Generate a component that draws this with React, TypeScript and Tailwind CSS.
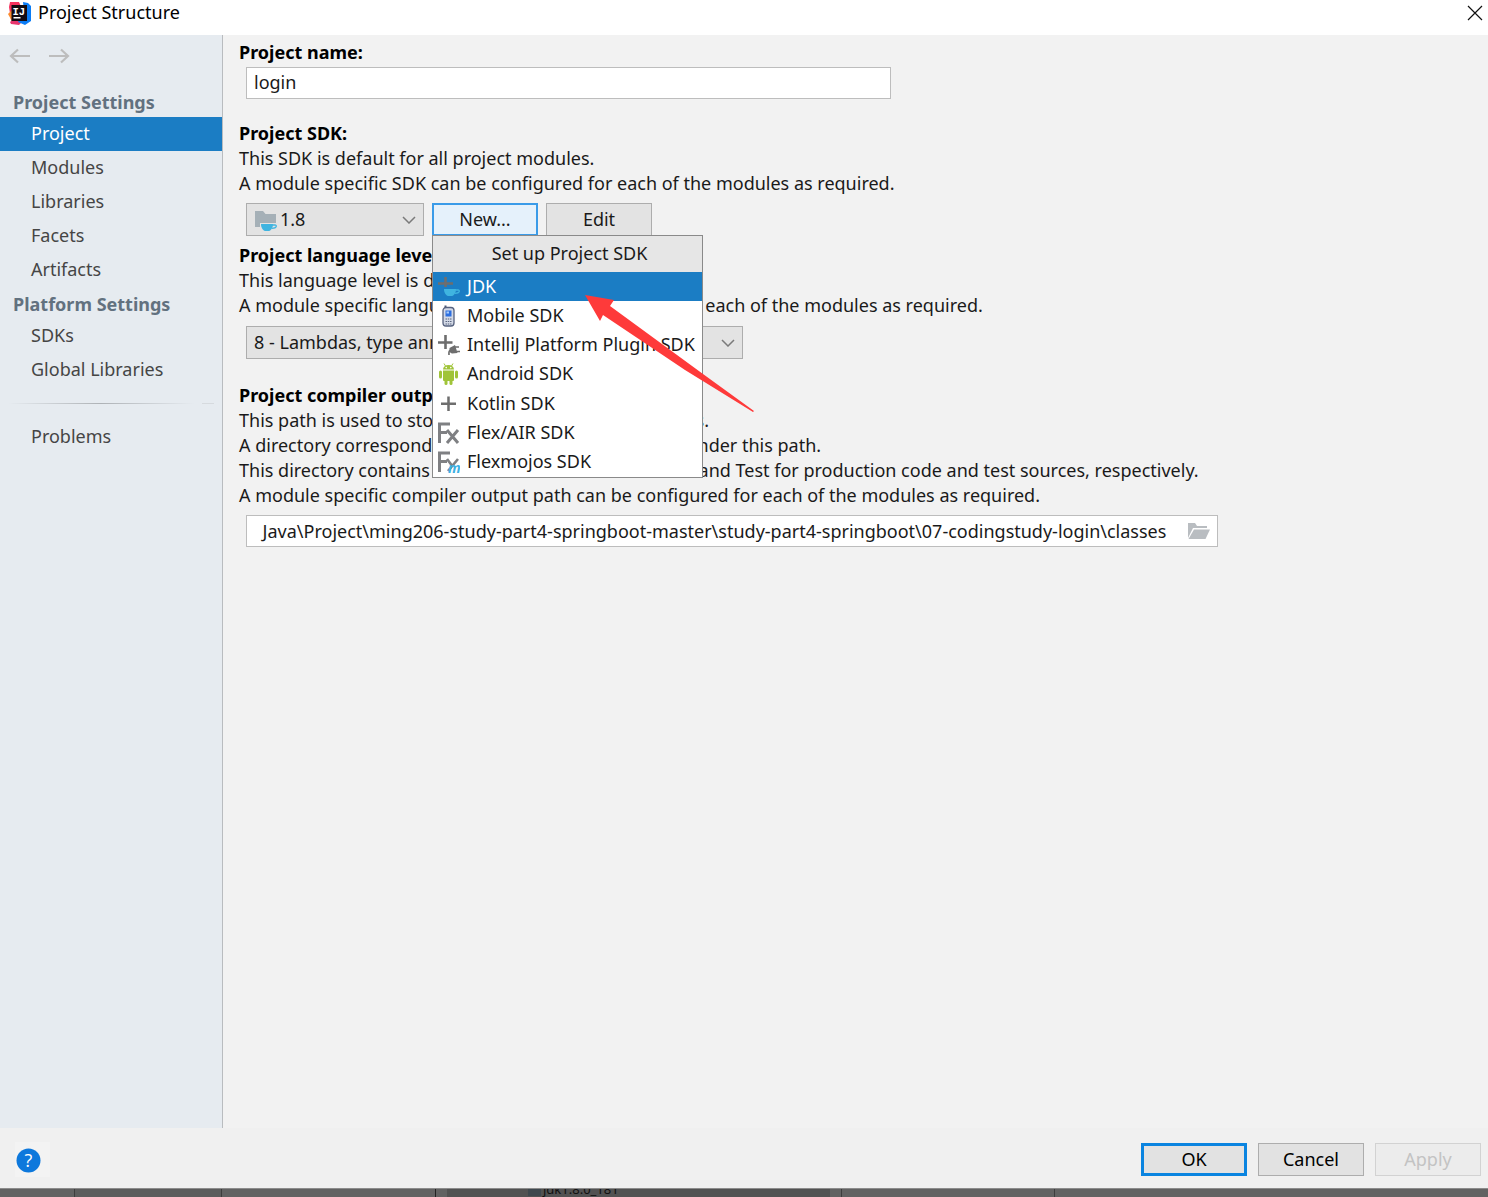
import { useEffect, useRef, useState } from 'react';
import type { ReactNode } from 'react';

const projectItems = ['Project', 'Modules', 'Libraries', 'Facets', 'Artifacts'];
const platformItems = ['SDKs', 'Global Libraries'];

function IdeaLogo() {
  return (
    <svg viewBox="0 0 24 24" className="w-6 h-6" aria-hidden="true">
      <path d="M1 6 L2 1 L11 1 L14 8 L6 20 L3 19 Z" fill="#f5315d" />
      <path d="M0 13 L5 8 L9 20 L5 22 Z" fill="#fb8a2c" />
      <path d="M2 21 L8 16 L14 21 L11 24 L3 23 Z" fill="#e8356d" />
      <path d="M15 1 L20 2 L23 5 L23 20 L17 24 L10 21 L16 10 Z" fill="#0a7cf5" />
      <rect x="3.500" y="4" width="15.500" height="16" fill="#120c12" />
      <text x="4.500" y="13.500" fontSize="10.500" fontWeight="700" fontFamily="Liberation Mono, monospace" fill="#fff">
        IJ
      </text>
      <rect x="5.500" y="16" width="7" height="1.500" fill="#fff" />
    </svg>
  );
}

function Cup({ x, y }: { x: number; y: number }) {
  return (
    <g transform={`translate(${x} ${y})`}>
      <path d="M0 0 H12 C12 4 10 6.500 8 7 H4 C2 6.500 0 4 0 0 Z" fill="#3fb4e0" />
      <path d="M11.500 1 H14 Q15.500 1 15.200 2.500 Q14.500 4.300 11 4.300" fill="none" stroke="#3fb4e0" strokeWidth="1.300" />
    </g>
  );
}

function SdkFolderIcon() {
  return (
    <svg viewBox="0 0 22 22" className="w-[22px] h-[22px]" aria-hidden="true">
      <path d="M0 1 H8 L10.500 4 H21 V13 H5 V17 H0 Z" fill="#a5b0b7" />
      <Cup x={6} y={14} />
    </svg>
  );
}

function JdkIcon() {
  return (
    <svg viewBox="0 0 22 22" className="w-[22px] h-[22px]" aria-hidden="true">
      <path d="M7.500 1 V11 M0 7.500 H15" stroke="#6e6e6e" strokeWidth="2.600" />
      <Cup x={6} y={13} />
    </svg>
  );
}

function MobileIcon() {
  return (
    <svg viewBox="0 0 22 22" className="w-[22px] h-[22px]" aria-hidden="true">
      <path d="M7.500 4 V0.500" stroke="#4b5875" strokeWidth="2" />
      <rect x="5" y="2.500" width="11" height="18.500" rx="3" fill="#d3d9e6" stroke="#56627f" strokeWidth="1.300" />
      <rect x="7.500" y="5.500" width="6" height="6" fill="#2d6fe0" />
      <rect x="8.500" y="6.500" width="2.500" height="2" fill="#a9cdfb" />
      <path d="M7.500 14 H13.500 M7.500 16.500 H13.500 M7.500 19 H13.500" stroke="#5b6680" strokeWidth="1.200" strokeDasharray="1.500 0.750" />
    </svg>
  );
}

function PluginIcon() {
  return (
    <svg viewBox="0 0 22 22" className="w-[22px] h-[22px]" aria-hidden="true">
      <path d="M7.500 1 V15 M0 8.500 H14.500" stroke="#6e6e6e" strokeWidth="2.600" />
      <path d="M11.500 14 L17 11 L19.500 19 L14 19.500 Q12 19 11.500 17 Z" fill="#6e6e6e" />
      <path d="M17 13 H21 M18.500 17.500 H22 M13 16 Q10.500 16 11 21" fill="none" stroke="#6e6e6e" strokeWidth="1.700" />
    </svg>
  );
}

function AndroidIcon() {
  return (
    <svg viewBox="0 0 22 22" className="w-[22px] h-[22px]" aria-hidden="true">
      <g fill="#a0c439">
        <path d="M5 6.500 Q5.500 2 10.500 2 Q15.500 2 16 6.500 Z" />
        <path d="M5 7.500 H16 V17 Q16 18 15 18 H6 Q5 18 5 17 Z" />
        <rect x="1" y="7.500" width="3" height="8" rx="1.500" />
        <rect x="17" y="7.500" width="3" height="8" rx="1.500" />
        <rect x="6.500" y="16" width="3" height="6" rx="1.500" />
        <rect x="11.500" y="16" width="3" height="6" rx="1.500" />
      </g>
      <path d="M6 0.500 L7.500 3 M15 0.500 L13.500 3" stroke="#a0c439" strokeWidth="1" />
      <circle cx="8.200" cy="4.600" r="0.800" fill="#fff" />
      <circle cx="12.800" cy="4.600" r="0.800" fill="#fff" />
    </svg>
  );
}

function PlusIcon() {
  return (
    <svg viewBox="0 0 22 22" className="w-[22px] h-[22px]" aria-hidden="true">
      <path d="M10.500 3.500 V18 M3 10.700 H18" stroke="#6e6e6e" strokeWidth="2.500" />
    </svg>
  );
}

function FlexIcon({ mojos = false }: { mojos?: boolean }) {
  return (
    <svg viewBox="0 0 22 22" className="w-[22px] h-[22px]" aria-hidden="true">
      <path d="M1.500 21 V2 H12 M1.500 10.500 H9" fill="none" stroke="#7f8083" strokeWidth="3" />
      {mojos ? (
        <>
          <path d="M9 8 L13.500 14 M20 8 L10 20" stroke="#7f8083" strokeWidth="2.600" />
          <text x="10" y="22" fontSize="14" fontStyle="italic" fontWeight="700" fontFamily="Open Sans, sans-serif" fill="#3db1e4">
            m
          </text>
        </>
      ) : (
        <path d="M9 8 L20 21 M20 8 L9 21" stroke="#7f8083" strokeWidth="3" />
      )}
    </svg>
  );
}

const sdkTypes: { label: string; icon: ReactNode }[] = [
  { label: 'JDK', icon: <JdkIcon /> },
  { label: 'Mobile SDK', icon: <MobileIcon /> },
  { label: 'IntelliJ Platform Plugin SDK', icon: <PluginIcon /> },
  { label: 'Android SDK', icon: <AndroidIcon /> },
  { label: 'Kotlin SDK', icon: <PlusIcon /> },
  { label: 'Flex/AIR SDK', icon: <FlexIcon /> },
  { label: 'Flexmojos SDK', icon: <FlexIcon mojos /> },
];

function Chevron() {
  return (
    <svg viewBox="0 0 14 8" className="absolute right-2 top-[13px] w-[14px] h-2 pointer-events-none" aria-hidden="true">
      <path d="M1 1 L7 7 L13 1" fill="none" stroke="#7a7a7a" strokeWidth="1.500" />
    </svg>
  );
}

interface NavItemProps {
  label: string;
  active: boolean;
  onSelect: (label: string) => void;
}

function NavItem({ label, active, onSelect }: NavItemProps) {
  return (
    <button
      type="button"
      onClick={() => onSelect(label)}
      className={
        active
          ? 'block w-full h-[34px] pb-0.5 pl-[31px] text-left bg-[#1b7dc4] text-white'
          : 'block w-full h-[34px] pb-0.5 pl-[31px] text-left text-[#454545]'
      }
    >
      {label}
    </button>
  );
}

function Sidebar() {
  const [selected, setSelected] = useState('Project');

  return (
    <nav className="w-[223px] shrink-0 bg-[#e6ebf0] border-r border-[#b9bcbf]">
      <div className="h-[50px] pl-[9px] pt-[11px] flex gap-[17px]">
        <button type="button" aria-label="Back" className="w-[22px] h-5">
          <svg viewBox="0 0 22 20" className="w-[22px] h-5">
            <path d="M21 10 H2 M9 3.500 L2 10 L9 16.500" fill="none" stroke="#bdbdbd" strokeWidth="2.200" />
          </svg>
        </button>
        <button type="button" aria-label="Forward" className="w-[22px] h-5">
          <svg viewBox="0 0 22 20" className="w-[22px] h-5">
            <path d="M1 10 H20 M13 3.500 L20 10 L13 16.500" fill="none" stroke="#bdbdbd" strokeWidth="2.200" />
          </svg>
        </button>
      </div>
      <h2 className="h-8 pl-[13px] leading-[34px] font-bold text-[#62717f]">Project Settings</h2>
      {projectItems.map((item) => (
        <NavItem key={item} label={item} active={item === selected} onSelect={setSelected} />
      ))}
      <h2 className="h-8 pl-[13px] leading-[34px] font-bold text-[#62717f]">Platform Settings</h2>
      {platformItems.map((item) => (
        <NavItem key={item} label={item} active={item === selected} onSelect={setSelected} />
      ))}
      <div className="my-4 mx-2 h-px flex gap-2">
        <div className="flex-1 bg-linear-to-r from-transparent via-[#aeb2b6] to-transparent" />
        <div className="w-3 bg-[#d6dade]" />
      </div>
      <NavItem label="Problems" active={selected === 'Problems'} onSelect={setSelected} />
    </nav>
  );
}

function SdkPopup() {
  return (
    <div className="absolute left-0 top-8 z-10 w-[271px] bg-white border border-[#8a8a8a]">
      <div className="h-9 leading-[34px] pl-1 text-center bg-[#e6e6e6]">Set up Project SDK</div>
      <ul className="h-[205px] flex flex-col">
        {sdkTypes.map((sdk, idx) => (
          <li key={sdk.label} className="flex-1 flex">
            <button
              type="button"
              className={
                idx === 0
                  ? 'w-full pl-[5px] flex items-center gap-[7px] bg-[#1b7dc4] text-white'
                  : 'w-full pl-[5px] flex items-center gap-[7px]'
              }
            >
              {sdk.icon}
              <span className="pb-0.5 leading-6 whitespace-nowrap">{sdk.label}</span>
            </button>
          </li>
        ))}
      </ul>
      {/* Pointer to the JDK entry */}
      <svg viewBox="0 0 170 118" className="absolute left-[152px] top-[58px] w-[170px] h-[118px] pointer-events-none" aria-hidden="true">
        <path d="M0 1 L29 6 L25 12 L118 80 L169 117 L168 118 L100 76 L18 21 L15 27 Z" fill="#fe3a3a" />
      </svg>
    </div>
  );
}

function ProjectPanel() {
  const outputRef = useRef<HTMLInputElement>(null);

  // Keep the tail of the path visible
  useEffect(() => {
    if (outputRef.current) {
      outputRef.current.scrollLeft = outputRef.current.scrollWidth;
    }
  }, []);

  return (
    <main className="flex-1 min-w-0 bg-[#f2f2f2] pl-4 pt-[5px] leading-[25px] text-[#1a1a1a]">
      <section>
        <label htmlFor="name" className="block font-bold text-black">Project name:</label>
        <input
          id="name"
          defaultValue="login"
          className="block ml-[7px] mt-0.5 w-[645px] h-8 px-[7px] pb-0.5 bg-white border border-[#bdbdbd]"
        />
      </section>

      <section className="mt-[22px]">
        <label htmlFor="sdk" className="block font-bold text-black">Project SDK:</label>
        <p>This SDK is default for all project modules.</p>
        <p>A module specific SDK can be configured for each of the modules as required.</p>
        <div className="ml-[7px] mt-[7px] flex">
          <div className="relative w-[178px]">
            <div className="absolute left-[9px] top-[7px] pointer-events-none">
              <SdkFolderIcon />
            </div>
            <select id="sdk" className="appearance-none w-full h-[33px] pl-[33px] bg-[#e3e3e3] border border-[#adadad]">
              <option>1.8</option>
            </select>
            <Chevron />
          </div>
          <div className="relative ml-2">
            <button type="button" className="w-[106px] h-[33px] bg-[#e5f1fb] border-2 border-[#3a9be8]">New...</button>
            <SdkPopup />
          </div>
          <button type="button" className="ml-2 w-[106px] h-[33px] bg-[#e3e3e3] border border-[#adadad]">Edit</button>
        </div>
      </section>

      <section className="mt-[7px]">
        <label htmlFor="level" className="block font-bold text-black">Project language level:</label>
        <p>This language level is default for all project modules.</p>
        <p>A module specific language level can be configured for each of the modules as required.</p>
        <div className="relative ml-[7px] mt-2 w-[497px]">
          <select id="level" className="appearance-none w-full h-[33px] pl-[7px] bg-[#e3e3e3] border border-[#adadad]">
            <option>8 - Lambdas, type annotations etc.</option>
          </select>
          <Chevron />
        </div>
      </section>

      <section className="mt-6">
        <label htmlFor="output" className="block font-bold text-black">Project compiler output:</label>
        <p>This path is used to store all project compilation results.</p>
        <p>A directory corresponding to each module is created under this path.</p>
        <p>This directory contains two subdirectories: Production and Test for production code and test sources, respectively.</p>
        <p>A module specific compiler output path can be configured for each of the modules as required.</p>
        <div className="ml-[7px] mt-[7px] flex items-center w-[972px] h-8 px-1 bg-white border border-[#bdbdbd]">
          <input
            id="output"
            ref={outputRef}
            defaultValue="Java\Project\ming206-study-part4-springboot-master\study-part4-springboot\07-codingstudy-login\classes"
            className="flex-1 min-w-0 text-center"
          />
          <button type="button" aria-label="Browse" className="ml-[10px] w-[25px]">
            <svg viewBox="0 0 23 18" className="w-[23px] h-[18px]">
              <path d="M0 16 V1 H7 L9 4 H19 V6 H5 Z" fill="#b9bdc1" />
              <path d="M6 7.500 H22 L17.500 17 H0.500 Z" fill="#b9bdc1" />
            </svg>
          </button>
        </div>
      </section>
    </main>
  );
}

export default function App() {
  return (
    <div className="min-h-screen flex flex-col bg-[#f0f0f0] font-['Noto_Sans','Open_Sans',sans-serif] text-[18px] text-black">
      <header className="h-[35px] pl-2 pr-[5px] pb-[10px] flex items-center bg-white">
        <IdeaLogo />
        <h1 className="ml-[6px]">Project Structure</h1>
        <button type="button" aria-label="Close" className="ml-auto w-4 h-4">
          <svg viewBox="0 0 16 16" className="w-4 h-4">
            <path d="M1 1 L15 15 M15 1 L1 15" stroke="#111" strokeWidth="1.200" />
          </svg>
        </button>
      </header>

      <div className="flex-1 flex">
        <Sidebar />
        <ProjectPanel />
      </div>

      <footer className="h-[60px] pl-[15px] pr-[7px] flex items-center gap-[11px]">
        <button type="button" aria-label="Help" className="mt-[3px] mr-auto w-[35px] h-[35px] pl-px pt-0.5 bg-[#f3f3f3]">
          <svg viewBox="0 0 25 25" className="w-[25px] h-[25px]">
            <circle cx="12.500" cy="12.500" r="12" fill="#0d78dc" />
            <text x="12.500" y="19" textAnchor="middle" fontSize="18" fontFamily="Open Sans, sans-serif" fill="#fff">
              ?
            </text>
          </svg>
        </button>
        <button type="button" className="mt-[3px] w-[106px] h-[33px] bg-[#e2e2e2] border-3 border-[#0a84e0]">OK</button>
        <button type="button" className="mt-[3px] w-[106px] h-[33px] bg-[#e2e2e2] border border-[#adadad]">Cancel</button>
        <button type="button" disabled className="mt-[3px] w-[106px] h-[33px] bg-[#ececec] border border-[#d2d2d2] text-[#c3c3c3]">Apply</button>
      </footer>

      {/* Dimmed edge of the window behind the dialog */}
      <div className="h-[9px] flex overflow-hidden bg-[#626262] border-t border-[#8c8c8c] text-[13px] text-[#111]">
        <div className="w-[75px] border-r border-[#3d3d3d]" />
        <div className="w-[147px] bg-[#5c5c5c] border-r border-[#3d3d3d]" />
        <div className="w-[214px] border-r border-[#222]" />
        <div className="ml-[11px] w-[383px] pl-[81px] flex gap-[2px] bg-[#525252]">
          <span className="w-[13px] h-[7px] bg-[#3f484e]" />
          <span className="-mt-[9px] leading-[18px]">jdk1.8.0_181</span>
        </div>
        <div className="w-3 border-r border-[#3d3d3d]" />
        <div className="w-[213px] border-r border-[#3d3d3d]" />
      </div>
    </div>
  );
}
